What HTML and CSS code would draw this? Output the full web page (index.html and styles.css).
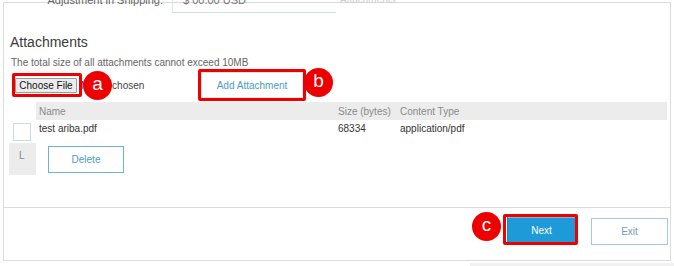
FILE: index.html
```html
<!DOCTYPE html>
<html lang="en">
  <head>
    <meta charset="UTF-8" />
    <meta name="viewport" content="width=device-width, initial-scale=1.0" />
    <title>Attachments</title>
    <link rel="stylesheet" href="styles.css">
  </head>
  <body>
    <div class="panel">
      <div class="top-row">
        <span class="field-label">Adjustment in Shipping:</span>
        <span class="field-input">$ 00.00 USD</span>
        <span class="field-note">Attachments</span>
      </div>

      <div class="attachments">
        <h2>Attachments</h2>
        <p class="hint">The total size of all attachments cannot exceed 10MB</p>

        <div class="file-row">
          <span class="file-input">
            <button class="choose-btn">Choose File</button>
            <span class="file-name">No file chosen</span>
          </span>
          <button class="btn btn-outline add-btn">Add Attachment</button>
        </div>

        <table class="att-table">
          <thead>
            <tr>
              <th class="col-check"></th>
              <th class="col-name">Name</th>
              <th class="col-size">Size (bytes)</th>
              <th class="col-type">Content Type</th>
            </tr>
          </thead>
          <tbody>
            <tr class="file-line">
              <td class="col-check"><span class="checkbox"></span></td>
              <td>test ariba.pdf</td>
              <td>68334</td>
              <td>application/pdf</td>
            </tr>
            <tr class="action-line">
              <td class="col-check tree">L</td>
              <td colspan="3"><button class="btn btn-outline delete-btn">Delete</button></td>
            </tr>
          </tbody>
        </table>
      </div>

      <div class="footer">
        <button class="btn btn-primary next-btn">Next</button>
        <button class="btn btn-outline exit-btn">Exit</button>
      </div>
    </div>
    <div class="strip"></div>

    <!-- Callouts -->
    <div class="callout-box box-a"></div>
    <div class="callout-dot dot-a">a</div>
    <div class="callout-box box-b"></div>
    <div class="callout-dot dot-b">b</div>
    <div class="callout-box box-c"></div>
    <div class="callout-dot dot-c">c</div>
  </body>
</html>
```

FILE: styles.css
```css
body {
  font-family: "Liberation Sans", Arial, sans-serif;
  font-size: 10px;
  color: #333;
  margin: 0;
  position: relative;
  width: 674px;
  height: 266px;
  overflow: hidden;
}

.panel {
  margin: 2px 0 0 3px;
  width: 668px;
  height: 259px;
  box-sizing: border-box;
  border: 1px solid #dcdcdc;
  display: flex;
  flex-direction: column;
}

/* Cut-off row above the section */
.top-row {
  display: flex;
  align-items: flex-start;
  height: 20px;
  margin-top: -10px;
}

.field-label {
  width: 159px;
  text-align: right;
  line-height: 14px;
  color: #666;
  font-size: 11px;
}

.field-input {
  margin-left: 9px;
  width: 164px;
  height: 20px;
  box-sizing: border-box;
  border-left: 1px solid #d6e8ef;
  border-bottom: 1px solid #c6e0ea;
  padding-left: 10px;
  line-height: 14px;
  font-size: 11px;
  color: #777;
}

.field-note {
  margin-left: 4px;
  line-height: 14px;
  color: #ccc;
}

.attachments {
  padding: 0 2px 0 5px;
}

.attachments h2 {
  margin: 21px 0 0 1px;
  font-size: 14px;
  line-height: 16px;
  font-weight: normal;
  color: #3a3a3a;
}

.hint {
  margin: 7px 0 0 2px;
  line-height: 12px;
  color: #666;
}

.file-row {
  display: flex;
  align-items: center;
  height: 32px;
}

.file-input {
  display: flex;
  align-items: center;
  margin-left: 6px;
  width: 186px;
}

.choose-btn {
  font-family: inherit;
  font-size: 10px;
  height: 15px;
  width: 62px;
  padding: 0;
  color: #111;
  background: #ececec;
  border: 1px solid #9a9a9a;
  border-radius: 1px;
}

.file-name {
  margin-left: 4px;
  color: #444;
}

.btn {
  font-family: inherit;
  font-size: 10px;
  height: 27px;
  padding: 0;
  cursor: pointer;
}

.btn-outline {
  background: #fff;
  border: 1px solid #a9d2e6;
  color: #4a9dce;
}

.btn-primary {
  background: #1f9ad9;
  border: 1px solid #1789c4;
  border-top: 2px solid #6cc0ea;
  color: #fff;
}

.add-btn {
  width: 102px;
  height: 26px;
  border-color: #dbe8ee;
}

.att-table {
  margin-top: 1px;
  width: 658px;
  border-collapse: collapse;
}

.att-table th,
.att-table td {
  padding: 0 0 0 3px;
  text-align: left;
  border-bottom: 1px solid #fff;
}

.att-table th {
  height: 18px;
  font-weight: normal;
  color: #8a8a8a;
  background: #ececec;
  vertical-align: middle;
}

.att-table th.col-check {
  background: #fff;
}

.col-check {
  width: 24px;
}

.col-name {
  width: 296px;
}

.col-size {
  width: 59px;
}

.file-line td {
  height: 22px;
  padding-top: 2px;
  vertical-align: top;
  color: #333;
  box-sizing: border-box;
}

.checkbox {
  display: block;
  width: 18px;
  height: 18px;
  box-sizing: border-box;
  margin-left: 1px;
  border: 1px solid #cbdbe4;
  background: #fff;
}

.action-line td {
  height: 33px;
  vertical-align: top;
  box-sizing: border-box;
  padding-top: 3px;
}

.action-line td.tree {
  background: #ececec;
  color: #888;
  padding: 7px 0 0 10px;
}

.delete-btn {
  margin-left: 9px;
  width: 76px;
  border-color: #6db3d9;
}

.footer {
  margin-top: 31px;
  border-top: 1px solid #dcdcdc;
  display: flex;
  justify-content: flex-end;
  gap: 15px;
  padding: 8px 2px 0 0;
}

.next-btn {
  width: 69px;
}

.exit-btn {
  width: 77px;
  color: #6f9db8;
  border-color: #9fcbe2;
  margin-top: 2px;
}

.strip {
  margin: 2px 0 0 470px;
  height: 4px;
  background: #f1f1f1;
}

/* Callout annotations */
.callout-box {
  position: absolute;
  box-sizing: border-box;
  border: 3px solid #ee0000;
  border-radius: 2px;
}

.box-a {
  left: 12px;
  top: 73px;
  width: 70px;
  height: 24px;
}

.box-b {
  left: 198px;
  top: 69px;
  width: 108px;
  height: 32px;
}

.box-c {
  left: 503px;
  top: 214px;
  width: 75px;
  height: 31px;
}

.callout-dot {
  position: absolute;
  width: 29px;
  height: 29px;
  border-radius: 50%;
  background: #ee0000;
  color: #fff;
  font-size: 19px;
  line-height: 26px;
  text-align: center;
}

.dot-a {
  left: 83px;
  top: 71px;
}

.dot-b {
  left: 304px;
  top: 68px;
}

.dot-c {
  left: 472px;
  top: 212px;
}
```
